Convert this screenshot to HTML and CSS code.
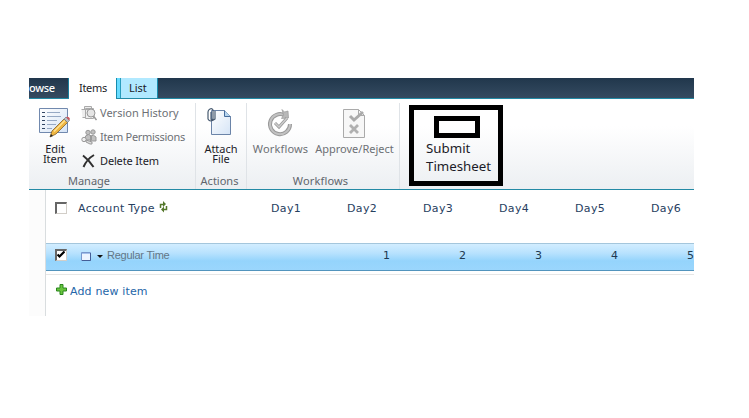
FILE: index.html
```html
<!DOCTYPE html>
<html lang="en">
<head>
<meta charset="utf-8">
<title>Timesheet</title>
<link rel="stylesheet" href="styles.css">
</head>
<body>
<main class="app">
  <nav class="tabs">
    <div class="tab browse"><span class="t-browse">owse</span></div>
    <div class="tab active"><span class="t-items">Items</span></div>
    <div class="tab list"><span class="t-list">List</span></div>
  </nav>
  <section class="ribbon">
    <div class="group manage">
      <div class="body">
        <div class="big edit">
          <svg width="34" height="34" viewBox="0 0 34 34"><defs><linearGradient id="pg" x2="1" y2="1"><stop stop-color="#fff"/><stop offset="1" stop-color="#d5e4f6"/></linearGradient></defs><path d="M1.500 2.500h28v24h-28z" fill="url(#pg)" stroke="#7189ae"/><path d="M4 6.500h3M4 10.500h3M4 14.500h3M4 18.500h3M4 22.500h3" stroke="#334764"/><path d="M9 6.500h13M9 10.500h14M9 14.500h10M9 18.500h9M9 22.500h5" stroke="#96a9c4"/><path d="M12 31l2-6L26 13l3.500 3.500L18 28z" fill="#efb640" stroke="#80602c" stroke-width=".8"/><path d="M16 25.500L27 14.500" stroke="#ffe391" stroke-width="1.500"/><path d="M26 13l2-2 3.500 3.500-2 2z" fill="#b8bfc6" stroke="#66707b" stroke-width=".6"/><path d="M28 11q3-1 4 2l-1 1.500z" fill="#cb5960"/><path d="M12 31l1-3 2 2z" fill="#252525"/></svg>
          <span class="t-edit">Edit</span><span class="t-item">Item</span>
        </div>
        <div class="commands">
          <div class="command disabled"><svg width="16" height="16" viewBox="0 0 16 16" fill="#eee" stroke="#aaa"><path d="M3.500 1.500h7v3h-7zM.5 4.500h4v8h-3M4.500 3.500h8v10h-8z"/><circle cx="10" cy="8" r="4" fill="#e5e5e5" stroke="#999"/><path d="M12.500 11l3 4" stroke="#999" stroke-width="1.500"/></svg><span class="t-version">Version History</span></div>
          <div class="command disabled"><svg width="16" height="16" viewBox="0 0 16 16" fill="#c0c0c0" stroke="#999"><circle cx="7" cy="3.500" r="2.200"/><circle cx="12" cy="3" r="2.200"/><path d="M4.500 11V7q3-3 6 0v4zM9.500 12V7q3-2 5.500 1v4z"/><circle cx="3" cy="10.500" r="2.200" fill="#eee"/><path d="M5 11l6 2v2H9l-4-2z" fill="#ddd"/></svg><span class="t-perm">Item Permissions</span></div>
          <div class="command"><svg width="16" height="16" viewBox="0 0 16 16"><path d="M2 2.500Q8 7 12.500 14M13 2Q6 6 2.500 14" fill="none" stroke="#303030" stroke-width="2"/></svg><span class="t-delete">Delete Item</span></div>
        </div>
      </div>
      <div class="label"><span class="t-manage">Manage</span></div>
    </div>
    <div class="group actions">
      <div class="big">
        <svg width="34" height="34" viewBox="0 0 34 34"><path d="M7.500 4.500h13l6 6v18h-19z" fill="url(#pg)" stroke="#6b84a8"/><path d="M20.500 4.500v6h6" fill="#b6d5ef" stroke="#456b9b"/><path d="M7 6v7q0 2 2 0V4q-1-2-3-1Q4 4 4 6v7q2 4 7 0V5" fill="none" stroke="#475a70" stroke-width="1.200"/></svg>
        <span class="t-attach">Attach</span><span class="t-file">File</span>
      </div>
      <div class="label"><span class="t-actions">Actions</span></div>
    </div>
    <div class="group workflows">
      <div class="body">
        <div class="big disabled workflow"><svg width="34" height="34" viewBox="0 0 34 34" fill="none"><path d="M21 9.500a10 10 0 1 0 5 8.500" stroke="#999" stroke-width="4"/><path d="M21 9.500a10 10 0 1 0 5 8.500" stroke="#c2c2c2" stroke-width="2"/><path d="M18 3.500l2.500 2.500 3.500-1 .5 7-7 .5 2-3.500z" fill="#b8b8b8" stroke="#999" stroke-width=".7"/><path d="M11 17l4 4 8-9" stroke="#999" stroke-width="3"/><path d="M11 17l4 4 8-9" stroke="#ccc" stroke-width="1.500"/></svg><span class="t-work">Workflows</span></div>
        <div class="big disabled approve"><svg width="34" height="34" viewBox="0 0 34 34" fill="none"><path d="M5.500 3.500h15l6 6v22h-21z" fill="#f7f7f7" stroke="#aaa"/><path d="M20.500 3.500v6h6" stroke="#aaa"/><path d="M12 10l4 4 9-8" stroke="#aaa" stroke-width="3"/><path d="M12 19l8 8m0-8l-8 8" stroke="#b0b0b0" stroke-width="2.800"/></svg><span class="t-approve">Approve/Reject</span></div>
      </div>
      <div class="label"><span class="t-flows">Workflows</span></div>
    </div>
    <div class="submit"><div class="submit-icon"></div><span class="t-submit">Submit</span><span class="t-timesheet">Timesheet</span></div>
  </section>
  <section class="content">
    <div class="sheet">
      <div class="row head">
        <div class="name"><i class="check"></i><span class="t-account">Account Type</span><svg class="refresh" width="9" height="12" viewBox="0 0 9 12"><path d="M1.500 7V3.500H5M7.500 5v3.500H4" fill="none" stroke="#55782c" stroke-width="1.500"/><path d="M4 0v6l3-3zM5 5.500v6l-3-3z" fill="#55782c"/></svg></div>
        <div><span>Day1</span></div><div><span>Day2</span></div><div><span>Day3</span></div><div><span>Day4</span></div><div><span>Day5</span></div><div><span>Day6</span></div>
      </div>
      <div class="row selected">
        <div class="name"><i class="check"><svg width="8" height="8" viewBox="0 0 8 8"><path d="M.5 3.500l2 2 5-5" fill="none" stroke="#000" stroke-width="2.200"/></svg></i><svg class="item-icon" width="10" height="9" viewBox="0 0 10 9"><path d="M.5.5h9v8h-9z" fill="#edf4ff" stroke="#7997cc"/><path d="M1 1.500h8" stroke="#a5c0ea"/><path d="M9.500 1v7.500H1" fill="none" stroke="#445e97"/></svg><i class="arrow"></i><span class="t-regular">Regular Time</span></div>
        <div></div><div>1</div><div>2</div><div>3</div><div>4</div><div>5</div>
      </div>
      <div class="add"><svg width="11" height="11" viewBox="0 0 11 11"><path d="M4 .5h3V4h3.500v3H7v3.500H4V7H.5V4H4z" fill="#68c43d" stroke="#2b871f"/></svg><span class="t-add">Add new item</span></div>
    </div>
  </section>
</main>
</body>
</html>
```
FILE: styles.css
```css
* { box-sizing: border-box; }
body { margin: 0; background: #fff; font: 11px/12px "Noto Sans", sans-serif; color: #1c1c28; }
svg { display: block; flex: none; }
span { display: block; white-space: nowrap; }
.app { width: 665px; height: 238px; margin: 78px 0 0 29px; overflow: hidden; }
.tabs { height: 21px; display: flex; background: linear-gradient(#21374c, #354b61); border-bottom: 1px solid #238aa5; }
.tab { height: 21px; padding-top: 4px; }
.browse { width: 40px; color: #fff; border-right: 1px solid #197f9e; height: 20px; font-weight: 500; letter-spacing: -.3px; }
.active { width: 47px; padding-left: 10px; background: #fff; letter-spacing: -.3px; }
.list { width: 42px; height: 20px; padding-left: 12px; background: #b1e9ff; border: solid #168cae; border-width: 0 1px; box-shadow: inset 3px 0 #68dcff, inset 4px 0 #289dbc; }
.ribbon { height: 91px; display: flex; background: linear-gradient(#fff 0%, #fff 30%, #eceff2 100%); border-bottom: 1px solid #238aa5; }
.group { height: 86px; margin-top: 4px; border-right: 1px solid #dfe3e7; display: flex; flex-direction: column; }
.manage { width: 167px; }
.actions { width: 51px; }
.workflows { width: 153px; }
.body { display: flex; }
.big { display: flex; flex-direction: column; align-items: center; line-height: 10px; padding-top: 3px; }
.big svg { margin-bottom: 4px; }
.edit { width: 52px; }
.commands { width: 114px; display: flex; flex-direction: column; gap: 8px; padding-top: 2px; }
.command { display: flex; align-items: center; gap: 3px; height: 16px; }
.t-delete { letter-spacing: -.15px; }
.t-perm { letter-spacing: -.3px; }
.disabled { color: #6d7075; }
.workflow { width: 67px; }
.t-work, .t-flows { letter-spacing: .15px; }
.approve { width: 81px; }
.label { margin-top: auto; height: 14px; display: flex; justify-content: center; color: #60656c; }
.manage .label { padding-right: 46px; }
.actions .label { padding-right: 3px; }
.workflows .label { padding-right: 5px; }
.submit { width: 94px; height: 81px; margin: 6px 0 0 9px; border: 5px solid #000; padding: 6px 0 0 12px; font-size: 13.3px; line-height: 18px; }
.submit-icon { width: 46px; height: 22px; border: 5px solid #000; margin: 0 0 1px 8px; }
.content { height: 126px; padding-left: 16px; background: #fcfcfc; }
.sheet { height: 126px; border-left: 1px solid #d9dddf; background: #fff; font: 11px/14px "DejaVu Sans", sans-serif; }
.row { display: grid; grid-template-columns: 192px repeat(6, 76px); text-align: right; }
.name { display: flex; text-align: left; }
.head { height: 53px; padding-top: 11px; color: #27405f; letter-spacing: .3px; }
.head > div:not(.name) { padding-right: 13px; display: flex; justify-content: flex-end; }
.head span { margin-top: 1px; }
.check { width: 12px; height: 12px; margin: 1px 11px 0 9px; background: #fff; border: 1px solid #d2cec8; border-top: 2px solid #666; border-left: 2px solid #666; }
.refresh { margin: 0 0 0 4px; }
.selected { height: 28px; padding-top: 5px; color: #203951; background: linear-gradient(#d2edff 0, #b8e2fe 35%, #95d4fc 65%, #9ad6fd 100%); border-top: 1px solid #a4c6dc; border-bottom: 1px solid #5294bd; }
.selected .check { margin: 0 14px 0 9px; }
.item-icon { margin-top: 3px; }
.arrow { width: 0; height: 0; margin: 6px 4px 0 6px; border: solid transparent; border-width: 3px 3px 0; border-top-color: #111; }
.t-regular { font-family: "Liberation Sans", sans-serif; letter-spacing: -.25px; margin-top: -1px; color: #627687; }
.add { margin-top: 3px; border-top: 1px solid #e6e6e6; height: 42px; padding: 9px 0 0 10px; display: flex; color: #2465a8; gap: 3px; letter-spacing: .15px; }
.t-add { margin-top: 1px; }
```
